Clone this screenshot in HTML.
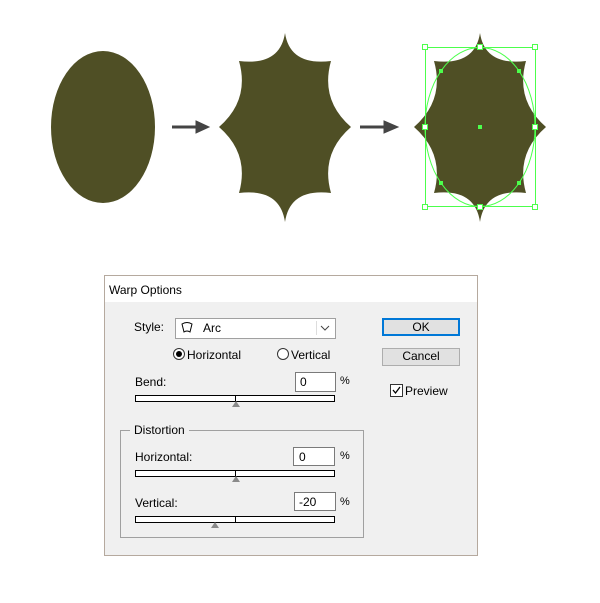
<!DOCTYPE html>
<html><head><style>
body{margin:0;width:600px;height:603px;background:#fff;position:relative;overflow:hidden;font-family:"Liberation Sans",sans-serif;font-size:12px;color:#000}
.a{position:absolute}
.dlg{left:104px;top:275px;width:374px;height:281px;background:#f0f0f0;border:1px solid #b5a99e;box-sizing:border-box}
.inp{background:#fff;border:1px solid #7a7a7a;box-sizing:border-box}
.btn{background:#e1e1e1;border:1px solid #adadad;box-sizing:border-box;text-align:center;line-height:15px}
.sl{height:7px;border:1px solid #000;background:#fff;box-sizing:border-box}
.tri{width:0;height:0;border-left:4px solid transparent;border-right:4px solid transparent;border-bottom:6px solid #8a8a8a}
</style></head><body>
<svg class="a" style="left:0;top:0" width="600" height="240">
<ellipse cx="103" cy="127" rx="52" ry="76" fill="#4f4f25"/>
<path fill="#4f4f25" d="M285,33 Q290,66 331,61 Q320,100 351,127 Q320,154 331,193 Q290,188 285,222 Q280,188 239,193 Q250,154 219,127 Q250,100 239,61 Q280,66 285,33Z"/>
<path transform="translate(195,0)" fill="#4f4f25" d="M285,33 Q290,66 331,61 Q320,100 351,127 Q320,154 331,193 Q290,188 285,222 Q280,188 239,193 Q250,154 219,127 Q250,100 239,61 Q280,66 285,33Z"/>
<g stroke="#444" stroke-width="3" fill="#444">
<line x1="172" y1="127" x2="200" y2="127"/><path d="M196,121 L209,127 L196,133Z" stroke-width="1"/>
<line x1="360" y1="127" x2="388" y2="127"/><path d="M384,121 L398,127 L384,133Z" stroke-width="1"/>
</g>
<g stroke="#4cff4c" stroke-width="1" fill="none">
<rect x="425.5" y="47.5" width="110" height="159"/>
<ellipse cx="480" cy="127" rx="55" ry="79.5"/>
</g>
<g fill="#fff" stroke="#4cff4c">
<rect x="422.5" y="44.5" width="5" height="5"/><rect x="477.5" y="44.5" width="5" height="5"/><rect x="532.5" y="44.5" width="5" height="5"/>
<rect x="422.5" y="124.5" width="5" height="5"/><rect x="532.5" y="124.5" width="5" height="5"/>
<rect x="422.5" y="204.5" width="5" height="5"/><rect x="477.5" y="204.5" width="5" height="5"/><rect x="532.5" y="204.5" width="5" height="5"/>
</g>
<g fill="#4cff4c"><rect x="478" y="125" width="4" height="4"/><rect x="439" y="69" width="4" height="4"/><rect x="517" y="69" width="4" height="4"/><rect x="439" y="181" width="4" height="4"/><rect x="517" y="181" width="4" height="4"/></g>
</svg>
<div class="a dlg">
<div class="a" style="left:0;top:0;width:372px;height:26px;background:#fff"></div>
<div class="a" style="left:4px;top:7px;font-size:12px">Warp Options</div>
</div>
<div class="a" style="left:134px;top:320px">Style:</div>
<div class="a inp" style="left:175px;top:318px;width:161px;height:21px;border-color:#a0a0a0"></div>
<svg class="a" style="left:180px;top:321px" width="14" height="13"><path d="M2,3 Q7,0 12,3 L10,11 Q7,9 4,11Z" fill="none" stroke="#000"/></svg>
<div class="a" style="left:203px;top:321px">Arc</div>
<div class="a" style="left:316px;top:321px;height:14px;border-left:1px solid #ddd;width:18px"></div>
<svg class="a" style="left:319px;top:324px" width="12" height="8"><path d="M2,2 L6,6 L10,2" fill="none" stroke="#444"/></svg>
<div class="a btn" style="left:382px;top:318px;width:78px;height:18px;border:2px solid #0078d7;line-height:14px">OK</div>
<div class="a btn" style="left:382px;top:348px;width:78px;height:18px">Cancel</div>
<div class="a" style="left:173px;top:348px;width:10px;height:10px;border:1px solid #333;border-radius:50%;background:#fff"></div>
<div class="a" style="left:176px;top:351px;width:6px;height:6px;border-radius:50%;background:#000"></div>
<div class="a" style="left:187px;top:348px">Horizontal</div>
<div class="a" style="left:277px;top:348px;width:10px;height:10px;border:1px solid #333;border-radius:50%;background:#fff"></div>
<div class="a" style="left:291px;top:348px">Vertical</div>
<div class="a" style="left:135px;top:375px">Bend:</div>
<div class="a inp" style="left:295px;top:372px;width:41px;height:20px"></div>
<div class="a" style="left:300px;top:375px">0</div>
<div class="a" style="left:340px;top:375px;font-size:11px">%</div>
<div class="a sl" style="left:135px;top:395px;width:200px"></div>
<div class="a" style="left:235px;top:395px;width:1px;height:6px;background:#000"></div>
<div class="a tri" style="left:232px;top:401px"></div>
<div class="a" style="left:390px;top:384px;width:11px;height:11px;border:1px solid #333;background:#fff"></div>
<svg class="a" style="left:391px;top:385px" width="11" height="11"><path d="M2,5 L4.5,8 L9,2" fill="none" stroke="#000" stroke-width="1.3"/></svg>
<div class="a" style="left:405px;top:384px">Preview</div>
<div class="a" style="left:120px;top:430px;width:244px;height:108px;border:1px solid #a0a0a0;box-sizing:border-box"></div>
<div class="a" style="left:130px;top:423px;background:#f0f0f0;padding:0 4px">Distortion</div>
<div class="a" style="left:135px;top:450px">Horizontal:</div>
<div class="a inp" style="left:293px;top:447px;width:42px;height:19px"></div>
<div class="a" style="left:299px;top:450px">0</div>
<div class="a" style="left:340px;top:450px;font-size:11px">%</div>
<div class="a sl" style="left:135px;top:470px;width:200px"></div>
<div class="a" style="left:235px;top:470px;width:1px;height:6px;background:#000"></div>
<div class="a tri" style="left:232px;top:476px"></div>
<div class="a" style="left:135px;top:496px">Vertical:</div>
<div class="a inp" style="left:294px;top:492px;width:42px;height:19px"></div>
<div class="a" style="left:299px;top:495px">-20</div>
<div class="a" style="left:340px;top:496px;font-size:11px">%</div>
<div class="a sl" style="left:135px;top:516px;width:200px"></div>
<div class="a" style="left:235px;top:516px;width:1px;height:6px;background:#000"></div>
<div class="a tri" style="left:211px;top:522px"></div>
</body></html>
